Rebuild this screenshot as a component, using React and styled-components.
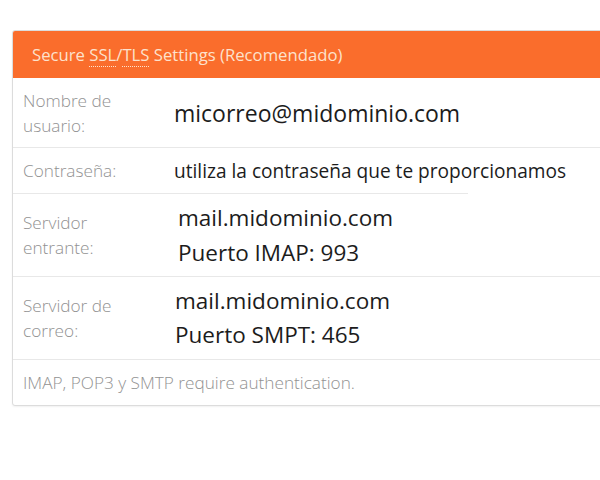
import React from "react";
import styled, { createGlobalStyle } from "styled-components";

const GlobalStyle = createGlobalStyle`
    html, body {
        margin: 0;
        padding: 0;
        background: #ffffff;
        overflow: hidden;
    }

    body {
        font-family: "Open Sans", "Liberation Sans", sans-serif;
    }
`

const Page = styled.div`
    width: 600px;
    height: 480px;
    padding: 30px 0 0 12px;
    box-sizing: border-box;
    overflow: hidden;
`

const Card = styled.section`
    width: 620px;
    border: 1px solid #dcdcdc;
    border-radius: 3px;
    box-shadow: 0 1px 2px rgba(0, 0, 0, 0.06);
    overflow: hidden;
    background: #fff;
`

const Header = styled.header`
    height: 47px;
    display: flex;
    align-items: center;
    padding-left: 19px;
    background-color: #fa6d2c;
    color: #fde2cd;
    font-size: 16.7px;
    font-weight: 400;

    & abbr {
        text-decoration: none;
        border-bottom: 1px dotted #fde2cd;
        line-height: 1.1;
    }
`

const Row = styled.div`
    display: grid;
    grid-template-columns: 151px 1fr;
    align-items: center;
    height: ${props => props.$height}px;
    padding-left: 10px;
    border-bottom: ${props => props.$line ? "1px solid #e8e8e8" : "none"};
`

const Divider = styled.div`
    width: ${props => props.$width}px;
    border-bottom: 1px solid #e8e8e8;
`

const Label = styled.div`
    color: #929292;
    font-size: 17.2px;
    font-weight: 300;
    line-height: 25px;
`

const Value = styled.div`
    color: #1c1c1c;
    font-size: ${props => props.$size}px;
    line-height: ${props => props.$lead}px;
    padding-left: ${props => props.$shift || 0}px;
`

const Note = styled.div`
    height: 45px;
    display: flex;
    align-items: center;
    padding-left: 10px;
    color: #929292;
    font-size: 17.2px;
    font-weight: 300;
`

function App() {
    return (
        <Page>
            <GlobalStyle />
            <Card>
                <Header>
                    <span>Secure <abbr>SSL</abbr>/<abbr>TLS</abbr> Settings (Recomendado)</span>
                </Header>
                <Row $height={69} $line>
                    <Label>Nombre de<br />usuario:</Label>
                    <Value $size={23} $lead={30}>micorreo@midominio.com</Value>
                </Row>
                <Row $height={45}>
                    <Label>Contraseña:</Label>
                    <Value $size={19.1} $lead={26}>utiliza la contraseña que te proporcionamos</Value>
                </Row>
                <Divider $width={455} />
                <Row $height={82} $line>
                    <Label>Servidor<br />entrante:</Label>
                    <Value $size={22.5} $lead={35} $shift={4}>mail.midominio.com<br />Puerto IMAP: 993</Value>
                </Row>
                <Row $height={82} $line>
                    <Label>Servidor de<br />correo:</Label>
                    <Value $size={22.5} $lead={34} $shift={1}>mail.midominio.com<br />Puerto SMPT: 465</Value>
                </Row>
                <Note>IMAP, POP3 y SMTP require authentication.</Note>
            </Card>
        </Page>
    );
}

export default App;
